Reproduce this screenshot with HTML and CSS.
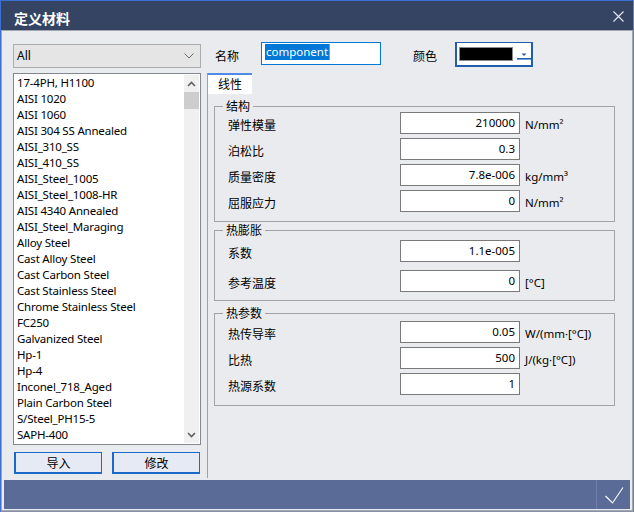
FILE: index.html
```html
<!DOCTYPE html>
<html lang="zh-CN">
<head>
<meta charset="utf-8">
<title>定义材料</title>
<link rel="stylesheet" href="styles.css">
</head>
<body>
<div class="window">
  <div class="titlebar">
    <span class="title">定义材料</span>
    <svg class="close" width="11" height="11" viewBox="0 0 11 11"><path d="M0.5 0.5L10.5 10.5M10.5 0.5L0.5 10.5" stroke="#e6e9f0" stroke-width="1.1" fill="none"/></svg>
  </div>
  <div class="client">
    <div class="main">
      <div class="left">
        <div class="select">
          <span class="select-text">All</span>
          <svg class="chev" width="10" height="6" viewBox="0 0 10 6"><path d="M0.5 0.5L5 5L9.5 0.5" stroke="#6a6a6a" stroke-width="1" fill="none"/></svg>
        </div>
        <div class="list">
          <ul class="items">
            <li>17-4PH, H1100</li>
            <li>AISI 1020</li>
            <li>AISI 1060</li>
            <li>AISI 304 SS Annealed</li>
            <li>AISI_310_SS</li>
            <li>AISI_410_SS</li>
            <li>AISI_Steel_1005</li>
            <li>AISI_Steel_1008-HR</li>
            <li>AISI 4340 Annealed</li>
            <li>AISI_Steel_Maraging</li>
            <li>Alloy Steel</li>
            <li>Cast Alloy Steel</li>
            <li>Cast Carbon Steel</li>
            <li>Cast Stainless Steel</li>
            <li>Chrome Stainless Steel</li>
            <li>FC250</li>
            <li>Galvanized Steel</li>
            <li>Hp-1</li>
            <li>Hp-4</li>
            <li>Inconel_718_Aged</li>
            <li>Plain Carbon Steel</li>
            <li>S/Steel_PH15-5</li>
            <li>SAPH-400</li>
          </ul>
          <div class="scrollbar">
            <div class="sb-btn">
              <svg width="9" height="6" viewBox="0 0 9 6"><path d="M1 5L4.5 1.5L8 5" stroke="#606060" stroke-width="1.6" fill="none"/></svg>
            </div>
            <div class="sb-thumb"></div>
            <div class="sb-track"></div>
            <div class="sb-btn">
              <svg width="9" height="6" viewBox="0 0 9 6"><path d="M1 1L4.5 4.5L8 1" stroke="#606060" stroke-width="1.6" fill="none"/></svg>
            </div>
          </div>
        </div>
        <div class="buttons">
          <div class="btn">导入</div>
          <div class="btn">修改</div>
        </div>
      </div>
      <div class="right">
        <div class="toprow">
          <span class="top-label">名称</span>
          <div class="name-input"><span class="sel">component</span><span class="caret"></span></div>
          <span class="top-label color-label">颜色</span>
          <div class="color-combo">
            <span class="swatch"></span>
            <span class="combo-arrow">
              <svg width="14" height="8" viewBox="0 0 14 8"><path d="M4.5 1.5H9.5L7 4Z" fill="#1d5fb0"/><rect x="0" y="6" width="14" height="1.6" fill="#1d5fb0"/></svg>
            </span>
          </div>
        </div>
        <div class="tabs">
          <div class="tab">线性</div>
        </div>
        <div class="tabpage">
          <fieldset class="group g1">
            <legend>结构</legend>
            <div class="row"><span class="lbl">弹性模量</span><span class="field">210000</span><span class="unit">N/mm²</span></div>
            <div class="row"><span class="lbl">泊松比</span><span class="field">0.3</span><span class="unit"></span></div>
            <div class="row"><span class="lbl">质量密度</span><span class="field">7.8e-006</span><span class="unit">kg/mm³</span></div>
            <div class="row"><span class="lbl">屈服应力</span><span class="field">0</span><span class="unit">N/mm²</span></div>
          </fieldset>
          <fieldset class="group g2">
            <legend>热膨胀</legend>
            <div class="row"><span class="lbl">系数</span><span class="field">1.1e-005</span><span class="unit"></span></div>
            <div class="row"><span class="lbl">参考温度</span><span class="field">0</span><span class="unit">[°C]</span></div>
          </fieldset>
          <fieldset class="group g3">
            <legend>热参数</legend>
            <div class="row"><span class="lbl">热传导率</span><span class="field">0.05</span><span class="unit">W/(mm·[°C])</span></div>
            <div class="row"><span class="lbl">比热</span><span class="field">500</span><span class="unit">J/(kg·[°C])</span></div>
            <div class="row"><span class="lbl">热源系数</span><span class="field">1</span><span class="unit"></span></div>
          </fieldset>
        </div>
      </div>
    </div>
    <div class="footer">
      <div class="ok">
        <svg width="20" height="20" viewBox="0 0 20 20"><path d="M1.5 11L8.5 18L19 2.5" stroke="#ffffff" stroke-width="1.1" fill="none"/></svg>
      </div>
    </div>
  </div>
</div>
</body>
</html>
```
FILE: styles.css
```css
* {
  box-sizing: border-box;
  margin: 0;
  padding: 0;
}

html, body {
  width: 634px;
  height: 512px;
  overflow: hidden;
}

body {
  font-family: "Noto Sans", "Noto Sans CJK SC", sans-serif;
  font-size: 12px;
  color: #000;
  background: #354463;
}

.window {
  width: 634px;
  height: 512px;
  display: flex;
  flex-direction: column;
  border: 1px solid #3e6fd2;
  border-right-color: #6d7fa9;
  border-bottom-color: #8790a6;
  background: #354463;
}

.titlebar {
  height: 29px;
  flex: none;
  display: flex;
  align-items: flex-start;
  justify-content: space-between;
  padding: 0 9px 0 13px;
}

.title {
  font-family: "Noto Sans CJK SC", sans-serif;
  font-size: 14px;
  font-weight: bold;
  line-height: 20px;
  margin-top: 7px;
  color: #ffffff;
}

.close {
  margin-top: 10px;
}

.client {
  flex: 1;
  display: flex;
  flex-direction: column;
  background: #eaebee;
  border: 1px solid #a2a6ae;
  padding: 0 2px 1px;
}

.main {
  flex: 1;
  display: flex;
  min-height: 0;
}

/* ---------- left column ---------- */
.left {
  width: 188px;
  margin-left: 9px;
  padding-top: 13px;
  display: flex;
  flex-direction: column;
}

.select {
  height: 24px;
  border: 1px solid #adadad;
  background: #e5e5e5;
  display: flex;
  align-items: center;
  justify-content: space-between;
  padding: 0 6px 0 3px;
}

.select-text {
  font-size: 12px;
  line-height: 16px;
}

.list {
  margin-top: 5px;
  height: 372px;
  border: 1px solid #828790;
  background: #ffffff;
  display: flex;
}

.items {
  list-style: none;
  flex: 1;
  padding: 1px 0 0 3px;
  overflow: hidden;
}

.items li {
  height: 16px;
  line-height: 16px;
  font-size: 11.5px;
  letter-spacing: -0.2px;
  white-space: nowrap;
  color: #000;
}

.scrollbar {
  width: 15px;
  margin: 1px 1px 1px 0;
  background: #f0f0f0;
  display: flex;
  flex-direction: column;
}

.sb-btn {
  height: 17px;
  display: flex;
  align-items: center;
  justify-content: center;
}

.sb-thumb {
  height: 17px;
  background: #cdcdcd;
}

.sb-track {
  flex: 1;
}

.buttons {
  margin-top: 7px;
  display: flex;
  gap: 10px;
  padding-left: 1px;
}

.btn {
  width: 88px;
  height: 22px;
  background: #e6eaf4;
  border: 1px solid #1b6ac9;
  border-left-width: 2px;
  border-bottom-width: 2px;
  display: flex;
  align-items: center;
  justify-content: center;
  font-family: "Noto Sans CJK SC", sans-serif;
  font-size: 12px;
}

/* ---------- right column ---------- */
.right {
  flex: 1;
  margin-left: 6px;
  padding-top: 11px;
  display: flex;
  flex-direction: column;
}

.toprow {
  height: 25px;
  display: flex;
  align-items: flex-start;
}

.top-label {
  width: 46px;
  margin-left: 8px;
  margin-top: 6px;
  line-height: 16px;
  font-family: "Noto Sans CJK SC", sans-serif;
}

.color-label {
  width: 42px;
  margin-left: 32px;
}

.name-input {
  width: 120px;
  height: 23px;
  border: 1px solid #0078d7;
  background: #ffffff;
  padding: 1px 0 0 3px;
  display: flex;
  align-items: flex-start;
}

.sel {
  background: #0078d7;
  color: #ffffff;
  font-size: 11.5px;
  line-height: 16px;
  height: 16px;
  padding: 0 1px;
}

.caret {
  width: 1px;
  height: 16px;
  background: #e8862a;
}

.color-combo {
  width: 78px;
  height: 25px;
  border: 2px solid #1f5fae;
  border-top-width: 1px;
  background: #ffffff;
  display: flex;
  align-items: center;
  padding-left: 2px;
}

.swatch {
  width: 54px;
  height: 14px;
  background: #000000;
  border: 1px solid #8a8a8a;
}

.combo-arrow {
  margin-left: 4px;
  margin-top: 4px;
  display: flex;
}

.tabs {
  margin-top: 6px;
  display: flex;
}

.tab {
  width: 45px;
  height: 21px;
  border-top: 2px solid #4f8be6;
  border-left: 1px solid #a0a0a0;
  background: #ffffff;
  font-family: "Noto Sans CJK SC", sans-serif;
  line-height: 18px;
  padding-left: 10px;
}

.tabpage {
  flex: 1;
  border-left: 1px solid #a0a0a0;
  margin-bottom: 2px;
  padding-left: 6px;
}

.group {
  width: 401px;
  border: 1px solid #a3a3a3;
  padding: 0;
}

.group legend {
  margin-left: 8px;
  padding: 0 3px;
  line-height: 12px;
  font-family: "Noto Sans CJK SC", sans-serif;
}

.g1 {
  margin-top: 6px;
  padding-bottom: 9px;
}

.g2 {
  margin-top: 2px;
  padding-top: 4px;
  padding-bottom: 8px;
}

.g3 {
  margin-top: 6px;
  padding-top: 2px;
  padding-bottom: 10px;
}

.g2 .row + .row {
  margin-top: 8px;
}

.row {
  display: grid;
  grid-template-columns: 167px 120px auto;
  column-gap: 5px;
  align-items: center;
  padding-left: 13px;
  height: 22px;
}

.row + .row {
  margin-top: 4px;
}

.lbl {
  font-family: "Noto Sans CJK SC", sans-serif;
  line-height: 16px;
  padding-top: 3px;
}

.field {
  height: 22px;
  border: 1px solid #7a7a7a;
  background: #ffffff;
  text-align: right;
  padding-right: 4px;
  font-size: 11.5px;
  line-height: 19px;
}

.unit {
  font-size: 11.5px;
  line-height: 16px;
  padding-top: 3px;
}

/* ---------- footer ---------- */
.footer {
  height: 29px;
  flex: none;
  background: #5b6b97;
  display: flex;
  justify-content: flex-end;
}

.ok {
  width: 34px;
  border-left: 1px solid #7080aa;
  display: flex;
  align-items: center;
  justify-content: center;
  padding-top: 1px;
}
```
